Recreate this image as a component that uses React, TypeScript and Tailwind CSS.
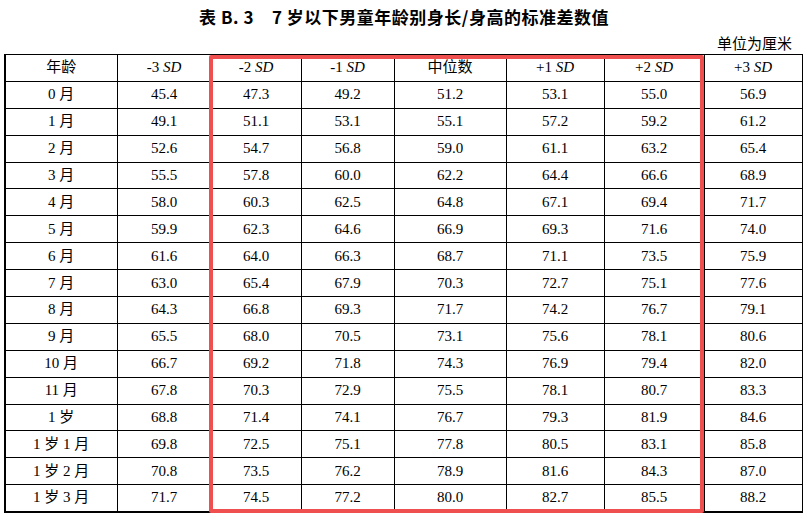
import React from "react";

const rows: string[][] = [
  ["0 月", "45.4", "47.3", "49.2", "51.2", "53.1", "55.0", "56.9"],
  ["1 月", "49.1", "51.1", "53.1", "55.1", "57.2", "59.2", "61.2"],
  ["2 月", "52.6", "54.7", "56.8", "59.0", "61.1", "63.2", "65.4"],
  ["3 月", "55.5", "57.8", "60.0", "62.2", "64.4", "66.6", "68.9"],
  ["4 月", "58.0", "60.3", "62.5", "64.8", "67.1", "69.4", "71.7"],
  ["5 月", "59.9", "62.3", "64.6", "66.9", "69.3", "71.6", "74.0"],
  ["6 月", "61.6", "64.0", "66.3", "68.7", "71.1", "73.5", "75.9"],
  ["7 月", "63.0", "65.4", "67.9", "70.3", "72.7", "75.1", "77.6"],
  ["8 月", "64.3", "66.8", "69.3", "71.7", "74.2", "76.7", "79.1"],
  ["9 月", "65.5", "68.0", "70.5", "73.1", "75.6", "78.1", "80.6"],
  ["10 月", "66.7", "69.2", "71.8", "74.3", "76.9", "79.4", "82.0"],
  ["11 月", "67.8", "70.3", "72.9", "75.5", "78.1", "80.7", "83.3"],
  ["1 岁", "68.8", "71.4", "74.1", "76.7", "79.3", "81.9", "84.6"],
  ["1 岁 1 月", "69.8", "72.5", "75.1", "77.8", "80.5", "83.1", "85.8"],
  ["1 岁 2 月", "70.8", "73.5", "76.2", "78.9", "81.6", "84.3", "87.0"],
  ["1 岁 3 月", "71.7", "74.5", "77.2", "80.0", "82.7", "85.5", "88.2"],
];

const widths = [112, 94, 90, 93, 112, 98, 100, 98];

function SD({ pre }: { pre: string }) {
  return (
    <>
      {pre} <i>SD</i>
    </>
  );
}

export default function App() {
  const serif = { fontFamily: '"Liberation Serif", "Noto Sans CJK SC", serif' };
  const th = "h-[26.9px] p-0 font-normal border border-black text-center";
  return (
    <div className="relative w-[808px] h-[516px] bg-white text-black overflow-hidden">
      <div
        className="h-[32px] pt-[2px] leading-[30px] text-center text-[17px] font-bold tracking-[0.5px]"
        style={{ fontFamily: '"Noto Sans CJK SC", "Noto Sans", sans-serif' }}
      >
        表 B. 3<span className="inline-block w-[18px]" />7 岁以下男童年龄别身长/身高的标准差数值
      </div>
      <div
        className="h-[22px] leading-[22px] text-right pr-[16px] text-[15px]"
        style={{ fontFamily: '"Noto Sans CJK SC", sans-serif' }}
      >
        单位为厘米
      </div>
      <table
        className="ml-[4px] w-[797px] table-fixed border-collapse text-[15px] leading-none"
        style={serif}
      >
        <colgroup>
          {widths.map((w, i) => (
            <col key={i} style={{ width: w }} />
          ))}
        </colgroup>
        <thead>
          <tr>
            <th className={th + " border-l-2"}>年龄</th>
            <th className={th}><SD pre="-3" /></th>
            <th className={th}><SD pre="-2" /></th>
            <th className={th}><SD pre="-1" /></th>
            <th className={th}>中位数</th>
            <th className={th}><SD pre="+1" /></th>
            <th className={th}><SD pre="+2" /></th>
            <th className={th}><SD pre="+3" /></th>
          </tr>
        </thead>
        <tbody>
          {rows.map((r, ri) => (
            <tr key={ri}>
              {r.map((c, ci) => (
                <td
                  key={ci}
                  className={
                    "h-[26.9px] p-0 border border-black text-center whitespace-pre " +
                    (ci === 0 ? "border-l-2 " : "") +
                    (ri === rows.length - 1 ? "border-b-2" : "")
                  }
                >
                  {c}
                </td>
              ))}
            </tr>
          ))}
        </tbody>
      </table>
      <div className="absolute left-[209px] top-[55px] w-[495px] h-[458px] border-4 border-[#f04f4f] rounded-[2px] pointer-events-none" />
    </div>
  );
}
